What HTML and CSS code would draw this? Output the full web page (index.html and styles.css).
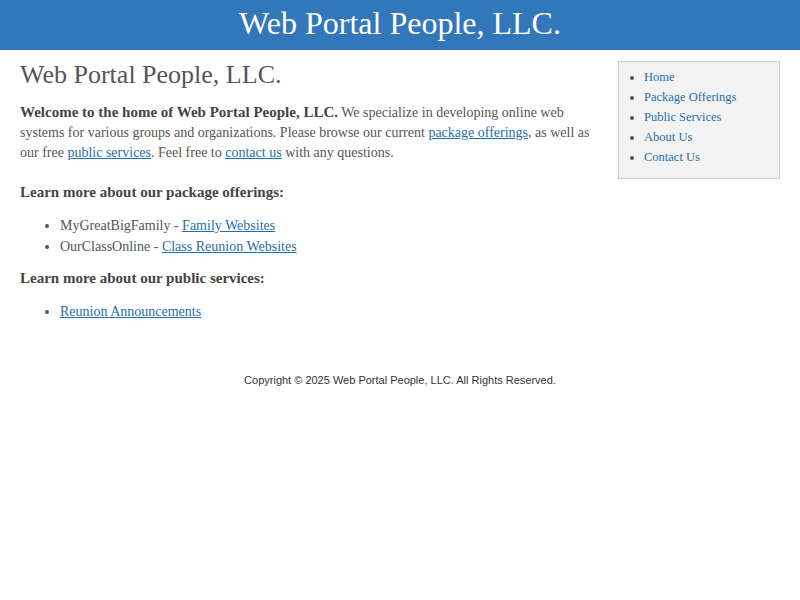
FILE: index.html
```html
<!DOCTYPE html>
<html>
<head>
<meta charset="utf-8">
<title>Web Portal People, LLC.</title>
<link rel="stylesheet" href="styles.css">
</head>
<body>
<header class="banner">Web Portal People, LLC.</header>
<div class="layout">
  <main class="content">
    <h1 class="page-title">Web Portal People, LLC.</h1>
    <p class="intro"><strong>Welcome to the home of Web Portal People, LLC.</strong> We specialize in developing online web systems for various groups and organizations. Please browse our current <a href="#">package offerings</a>, as well as our free <a href="#">public services</a>. Feel free to <a href="#">contact us</a> with any questions.</p>
    <h3 class="section-title">Learn more about our package offerings:</h3>
    <ul class="list">
      <li>MyGreatBigFamily - <a href="#">Family Websites</a></li>
      <li>OurClassOnline - <a href="#">Class Reunion Websites</a></li>
    </ul>
    <h3 class="section-title">Learn more about our public services:</h3>
    <ul class="list">
      <li><a href="#">Reunion Announcements</a></li>
    </ul>
  </main>
  <aside class="sidebar">
    <ul class="nav">
      <li><a href="#">Home</a></li>
      <li><a href="#">Package Offerings</a></li>
      <li><a href="#">Public Services</a></li>
      <li><a href="#">About Us</a></li>
      <li><a href="#">Contact Us</a></li>
    </ul>
  </aside>
</div>
<footer class="footer">Copyright © 2025 Web Portal People, LLC. All Rights Reserved.</footer>
</body>
</html>
```
FILE: styles.css
```css
html, body {
  margin: 0;
  padding: 0;
  background: #fff;
}
body {
  font-family: "Liberation Serif", Georgia, serif;
  color: #555;
  font-size: 14px;
}
.banner {
  background: #3377bb;
  color: #fff;
  height: 50px;
  line-height: 46px;
  text-align: center;
  font-size: 32px;
}
.layout {
  display: flex;
  padding: 0 20px;
  gap: 18px;
}
.content {
  flex: 1;
}
.page-title {
  font-weight: normal;
  font-size: 26px;
  margin: 10px 0 12px;
  line-height: 30px;
  color: #555;
}
.intro {
  margin: 0;
  line-height: 20px;
}
.intro strong {
  font-size: 15px;
  color: #444;
}
a {
  color: #1f6fa8;
}
.section-title {
  font-size: 15px;
  margin: 19px 0 13px;
  line-height: 20px;
  color: #444;
}
.list + .section-title {
  margin-top: 11px;
}
.list {
  margin: 0;
  padding-left: 40px;
  line-height: 21px;
}
.sidebar {
  width: 160px;
  margin-top: 11px;
  align-self: flex-start;
  background: #f3f3f3;
  border: 1px solid #ccc;
}
.nav {
  margin: 5px 0 11px;
  padding-left: 25px;
  line-height: 20px;
  font-size: 12.5px;
}
.nav a {
  text-decoration: none;
}
.footer {
  margin-top: 52px;
  text-align: center;
  font-family: "Liberation Sans", Arial, sans-serif;
  font-size: 11px;
  color: #333;
}
```
